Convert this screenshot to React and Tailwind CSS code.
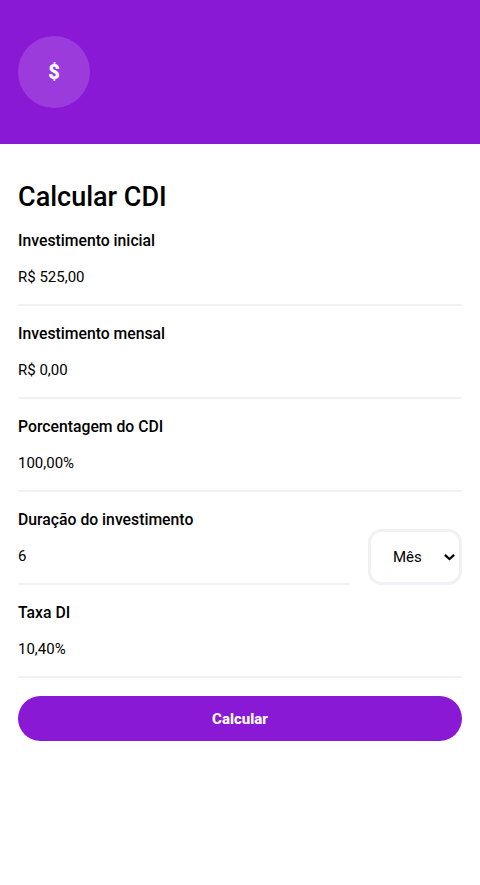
import React from "react";

function Field({ label, value, className = "" }) {
  return (
    <label className={"flex h-[75px] flex-col border-b-2 border-[#f0f0f5] " + className}>
      <span className="text-[15.75px] leading-[19px] font-medium">{label}</span>
      <input
        className="mt-[9px] h-[36px] w-full bg-transparent text-[15px] outline-none"
        defaultValue={value}
      />
    </label>
  );
}

export default function App() {
  return (
    <div className="min-h-screen bg-white font-['Roboto',sans-serif] text-black">
      <header className="flex h-36 items-center bg-[#8a19d6] px-[18px]">
        <div className="flex size-[72px] items-center justify-center rounded-full bg-white/15 text-xl font-black text-white">
          $
        </div>
      </header>
      <main className="px-[18px] pt-[37px]">
        <h1 className="text-[27px] leading-8 font-medium">Calcular CDI</h1>
        <form className="mt-[18px] flex flex-col gap-[18px]" onSubmit={(e) => e.preventDefault()}>
          <Field label="Investimento inicial" value="R$ 525,00" />
          <Field label="Investimento mensal" value="R$ 0,00" />
          <Field label="Porcentagem do CDI" value="100,00%" />
          <div className="flex h-[75px] items-end gap-[18px]">
            <Field label="Duração do investimento" value="6" className="flex-1" />
            <div className="relative h-14 w-[94px] shrink-0">
              <select className="size-full appearance-none rounded-[14px] border-[3px] border-[#f0f0f5] bg-white pl-[22px] text-[15px]">
                <option>Mês</option>
                <option>Ano</option>
              </select>
              <svg
                className="pointer-events-none absolute top-[25px] right-[7px] h-[7px] w-[11px]"
                viewBox="0 0 11 7"
                fill="none"
                stroke="currentColor"
                strokeWidth="2.2"
              >
                <path d="M.9.9 5.5 5.1 10.1.9" />
              </svg>
            </div>
          </div>
          <Field label="Taxa DI" value="10,40%" />
          <button className="h-[45px] rounded-full bg-[#8a19d6] pt-px text-[15px] font-extrabold text-white">
            Calcular
          </button>
        </form>
      </main>
    </div>
  );
}
